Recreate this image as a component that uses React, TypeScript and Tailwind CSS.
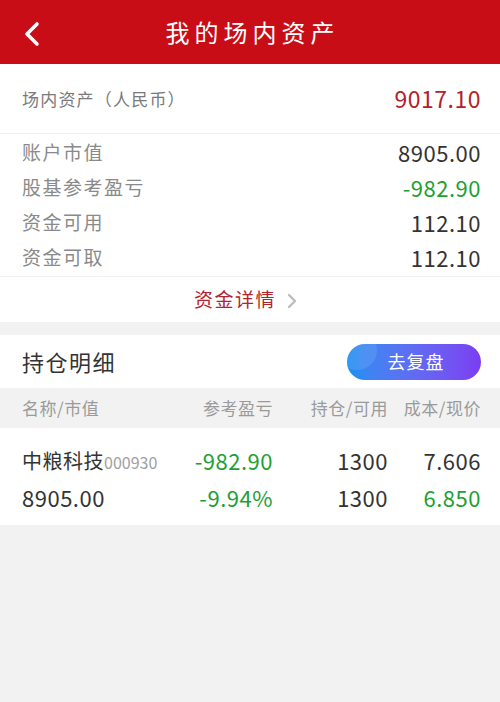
import React from "react";

const font = { fontFamily: '"Noto Sans CJK SC", "Noto Sans", sans-serif' };

function InfoRow({ label, value, color }: { label: string; value: string; color: string }) {
  return (
    <div className="flex h-[35px] items-center justify-between pl-[22px] pr-[19px]">
      <span className="text-[19px] tracking-[1.5px] text-[#8a8a8a]">{label}</span>
      <span className={`text-[22px] tracking-[0.5px] ${color}`}>{value}</span>
    </div>
  );
}

export default function App() {
  return (
    <div className="flex min-h-[702px] w-[500px] flex-col bg-[#f2f2f2]" style={font}>
      {/* header */}
      <div className="relative flex h-[64px] items-center justify-center bg-[#c80d17]">
        <svg className="absolute left-[22px] top-[21px]" width="20" height="26" viewBox="0 0 20 26" fill="none">
          <path d="M15 3 L5 13 L15 23" stroke="white" strokeWidth="3.6" strokeLinecap="round" strokeLinejoin="round" />
        </svg>
        <h1 className="pl-[5px] text-[24px] tracking-[5px] text-white">我的场内资产</h1>
      </div>

      {/* assets */}
      <div className="bg-white">
        <div className="flex h-[70px] items-center justify-between border-b border-[#f0f0f0] pl-[22px] pr-[19px]">
          <span className="text-[17px] tracking-[1.2px] text-[#7a7a7a]">场内资产（人民币）</span>
          <span className="text-[23px] tracking-[0.5px] text-[#b3212b]">9017.10</span>
        </div>
        <div className="border-b border-[#f0f0f0] py-[1px]">
          <InfoRow label="账户市值" value="8905.00" color="text-[#333]" />
          <InfoRow label="股基参考盈亏" value="-982.90" color="text-[#1ea033]" />
          <InfoRow label="资金可用" value="112.10" color="text-[#333]" />
          <InfoRow label="资金可取" value="112.10" color="text-[#333]" />
        </div>
        <div className="flex h-[45px] items-center justify-center gap-[10px] pr-[8px]">
          <span className="text-[19px] tracking-[1.5px] text-[#b3232c]">资金详情</span>
          <svg width="12" height="18" viewBox="0 0 12 18" fill="none" className="mt-[3px]">
            <path d="M3 3 L9 9 L3 15" stroke="#bdbdbd" strokeWidth="2.4" strokeLinecap="round" strokeLinejoin="round" />
          </svg>
        </div>
      </div>

      {/* holdings */}
      <div className="mt-[13px] bg-white">
        <div className="flex h-[53px] items-center justify-between pl-[22px] pr-[19px]">
          <span className="text-[22px] tracking-[1.5px] text-[#333]">持仓明细</span>
          <button className="relative flex h-[36px] w-[134px] items-center justify-center overflow-hidden rounded-full bg-gradient-to-r from-[#168ff2] to-[#7b3cf2]">
            <span className="absolute left-[-10px] top-[-14px] h-[40px] w-[40px] rounded-full bg-white/10" />
            <span className="relative pl-[4px] text-[18px] tracking-[1px] text-white">去复盘</span>
          </button>
        </div>
        <div className="flex h-[40px] items-center bg-[#f2f2f2] pl-[22px] pr-[19px] text-[17px] tracking-[0.5px] text-[#9a9a9a]">
          <span className="flex-1">名称/市值</span>
          <span className="w-[110px] text-right">参考盈亏</span>
          <span className="w-[115px] text-right">持仓/可用</span>
          <span className="w-[93px] text-right">成本/现价</span>
        </div>
        <div className="pb-[9px] pt-[14px]">
          <div className="flex h-[37px] items-center pl-[22px] pr-[19px] text-[22px] tracking-[0.5px]">
            <span className="flex flex-1 items-baseline text-[#333]">
              <span className="text-[20px]">中粮科技</span>
              <span className="text-[16px] tracking-normal text-[#a0a0a0]">000930</span>
            </span>
            <span className="w-[110px] text-right text-[#1ea033]">-982.90</span>
            <span className="w-[115px] text-right text-[#333]">1300</span>
            <span className="w-[93px] text-right text-[#333]">7.606</span>
          </div>
          <div className="flex h-[37px] items-center pl-[22px] pr-[19px] text-[22px] tracking-[0.5px]">
            <span className="flex-1 text-[#333]">8905.00</span>
            <span className="w-[110px] text-right text-[#1ea033]">-9.94%</span>
            <span className="w-[115px] text-right text-[#333]">1300</span>
            <span className="w-[93px] text-right text-[#1ea033]">6.850</span>
          </div>
        </div>
      </div>
    </div>
  );
}
